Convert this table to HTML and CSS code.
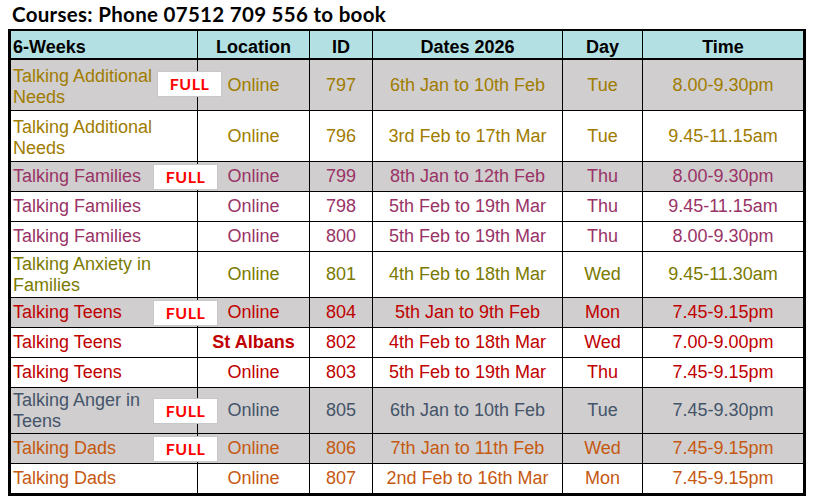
FILE: index.html
```html
<!DOCTYPE html>
<html>
<head>
<meta charset="utf-8">
<title>Courses</title>
<link rel="stylesheet" href="styles.css">
</head>
<body>
<div class="page">
  <div class="title">Courses: Phone 07512 709 556 to book</div>
  <table class="courses">
    <colgroup>
      <col class="c-name"><col class="c-loc"><col class="c-id"><col class="c-dates"><col class="c-day"><col class="c-time">
    </colgroup>
    <thead>
      <tr>
        <th class="name">6-Weeks</th><th>Location</th><th>ID</th><th>Dates 2026</th><th>Day</th><th>Time</th>
      </tr>
    </thead>
    <tbody>
      <tr class="gray gold r51">
        <td class="name">Talking Additional Needs<span class="full first">FULL</span></td>
        <td>Online</td><td>797</td><td>6th Jan to 10th Feb</td><td>Tue</td><td>8.00-9.30pm</td>
      </tr>
      <tr class="gold r51">
        <td class="name">Talking Additional Needs</td>
        <td>Online</td><td>796</td><td>3rd Feb to 17th Mar</td><td>Tue</td><td>9.45-11.15am</td>
      </tr>
      <tr class="gray plum">
        <td class="name">Talking Families<span class="full">FULL</span></td>
        <td>Online</td><td>799</td><td>8th Jan to 12th Feb</td><td>Thu</td><td>8.00-9.30pm</td>
      </tr>
      <tr class="plum">
        <td class="name">Talking Families</td>
        <td>Online</td><td>798</td><td>5th Feb to 19th Mar</td><td>Thu</td><td>9.45-11.15am</td>
      </tr>
      <tr class="plum">
        <td class="name">Talking Families</td>
        <td>Online</td><td>800</td><td>5th Feb to 19th Mar</td><td>Thu</td><td>8.00-9.30pm</td>
      </tr>
      <tr class="olive r46">
        <td class="name">Talking Anxiety in Families</td>
        <td>Online</td><td>801</td><td>4th Feb to 18th Mar</td><td>Wed</td><td>9.45-11.30am</td>
      </tr>
      <tr class="gray red">
        <td class="name">Talking Teens<span class="full">FULL</span></td>
        <td>Online</td><td>804</td><td>5th Jan to 9th Feb</td><td>Mon</td><td>7.45-9.15pm</td>
      </tr>
      <tr class="red">
        <td class="name">Talking Teens</td>
        <td class="venue">St Albans</td><td>802</td><td>4th Feb to 18th Mar</td><td>Wed</td><td>7.00-9.00pm</td>
      </tr>
      <tr class="red">
        <td class="name">Talking Teens</td>
        <td>Online</td><td>803</td><td>5th Feb to 19th Mar</td><td>Thu</td><td>7.45-9.15pm</td>
      </tr>
      <tr class="gray slate r46">
        <td class="name">Talking Anger in Teens<span class="full">FULL</span></td>
        <td>Online</td><td>805</td><td>6th Jan to 10th Feb</td><td>Tue</td><td>7.45-9.30pm</td>
      </tr>
      <tr class="gray orange">
        <td class="name">Talking Dads<span class="full">FULL</span></td>
        <td>Online</td><td>806</td><td>7th Jan to 11th Feb</td><td>Wed</td><td>7.45-9.15pm</td>
      </tr>
      <tr class="orange last">
        <td class="name">Talking Dads</td>
        <td>Online</td><td>807</td><td>2nd Feb to 16th Mar</td><td>Mon</td><td>7.45-9.15pm</td>
      </tr>
    </tbody>
  </table>
</div>
</body>
</html>
```

FILE: styles.css
```css
html, body {
  margin: 0;
  padding: 0;
  background: #fff;
}

.page {
  padding-left: 8px;
}

.title {
  height: 29px;
  line-height: 29px;
  padding-left: 4px;
  font-family: Lato, "Open Sans", sans-serif;
  font-weight: 700;
  font-size: 20.5px;
  letter-spacing: 0.3px;
  color: #000;
}

.courses {
  border-collapse: collapse;
  table-layout: fixed;
  width: 798px;
  border: 3px solid #000;
  border-top-width: 2px;
  font-family: "Liberation Sans", Arial, sans-serif;
  font-size: 18px;
}

.c-name { width: 188px; }
.c-loc { width: 112px; }
.c-id { width: 63px; }
.c-dates { width: 190px; }
.c-day { width: 80px; }
.c-time { width: 162px; }

.courses th,
.courses td {
  border: 1px solid #000;
  padding: 0 2px;
  text-align: center;
  vertical-align: middle;
  white-space: nowrap;
}

.courses thead th {
  background: #b3e0e3;
  border-bottom: 2px solid #000;
  height: 27px;
  vertical-align: bottom;
  font-weight: 700;
  color: #000;
}

.courses th.name,
.courses td.name {
  text-align: left;
}

.courses td.name {
  white-space: normal;
  padding-right: 6px;
  position: relative;
}

.courses td {
  height: 29px;
}

.courses tr.r51 td { height: 50px; }
.courses tr.r51 td.name { padding-top: 3px; height: 47px; }
.courses tr.r46 td { height: 45px; }

.gray td { background: #d0cece; }

.gold td { color: #a07c00; }
.plum td { color: #993366; }
.olive td { color: #7a7a00; }
.red td { color: #c00000; }
.slate td { color: #44546a; }
.orange td { color: #c65911; }

.courses td.venue { font-weight: 700; }

.full {
  position: absolute;
  left: 142px;
  top: 50%;
  margin-top: -13px;
  box-sizing: border-box;
  width: 65px;
  height: 26px;
  border: 1px solid #c8c8c8;
  background: #fff;
  color: #ff0000;
  font-family: Lato, "Open Sans", sans-serif;
  font-weight: 700;
  font-size: 16px;
  line-height: 24px;
  text-align: center;
  letter-spacing: 0.5px;
}

.r51 .full {
  margin-top: -14px;
}

.full.first {
  left: 146px;
}
```
